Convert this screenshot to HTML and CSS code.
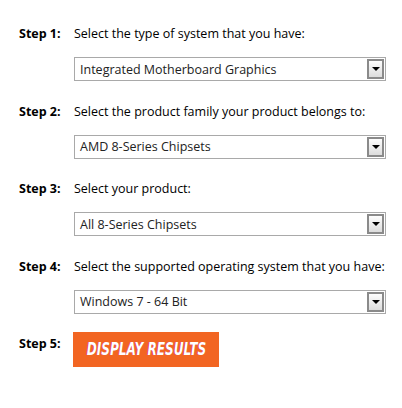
FILE: index.html
```html
<!DOCTYPE html>
<html>
<head>
<meta charset="utf-8">
<link rel="stylesheet" href="styles.css">
</head>
<body>
<div class="form">
  <div class="step">
    <div class="label">Step 1:</div>
    <div class="content">
      <div class="prompt">Select the type of system that you have:</div>
      <div class="select"><span class="value">Integrated Motherboard Graphics</span><span class="arrow"><i></i></span></div>
    </div>
  </div>
  <div class="step">
    <div class="label">Step 2:</div>
    <div class="content">
      <div class="prompt">Select the product family your product belongs to:</div>
      <div class="select"><span class="value">AMD 8-Series Chipsets</span><span class="arrow"><i></i></span></div>
    </div>
  </div>
  <div class="step">
    <div class="label">Step 3:</div>
    <div class="content">
      <div class="prompt">Select your product:</div>
      <div class="select"><span class="value">All 8-Series Chipsets</span><span class="arrow"><i></i></span></div>
    </div>
  </div>
  <div class="step">
    <div class="label">Step 4:</div>
    <div class="content">
      <div class="prompt">Select the supported operating system that you have:</div>
      <div class="select"><span class="value">Windows 7 - 64 Bit</span><span class="arrow"><i></i></span></div>
    </div>
  </div>
  <div class="step last">
    <div class="label">Step 5:</div>
    <div class="content">
      <div class="button"><span class="btn-text">DISPLAY RESULTS</span></div>
    </div>
  </div>
</div>
</body>
</html>
```
FILE: styles.css
```css
html, body {
  margin: 0;
  padding: 0;
  background: #ffffff;
}
body {
  font-family: "Open Sans", "Noto Sans", sans-serif;
  font-size: 12.5px;
  color: #000;
}
.form {
  padding: 25px 0 0 19px;
  display: flex;
  flex-direction: column;
  gap: 21.5px;
}
.step {
  display: flex;
}
.label {
  width: 55px;
  font-weight: bold;
  line-height: 18px;
}
.content {
  display: flex;
  flex-direction: column;
  gap: 14px;
}
.prompt {
  line-height: 18px;
}
.select {
  width: 304px;
  height: 22px;
  border: 1px solid #a9a9a9;
  display: flex;
  align-items: center;
  padding: 0 1px 0 5px;
  color: #222;
}
.value {
  flex: 1;
}
.arrow {
  width: 13px;
  height: 16px;
  border: 2px solid #8a8a8a;
  background: linear-gradient(#fdfdfd, #dcdcdc);
  display: flex;
  align-items: center;
  justify-content: center;
}
.arrow i {
  width: 0;
  height: 0;
  border-left: 4px solid transparent;
  border-right: 4px solid transparent;
  border-top: 4px solid #000;
}
.last .label {
  padding-top: 0;
}
.last .content {
  margin-top: -3px;
}
.button {
  width: 146px;
  height: 35px;
  background: #f26522;
  color: #fff;
  display: flex;
  align-items: center;
  justify-content: center;
  margin-left: -1px;
}
.btn-text {
  display: inline-block;
  font-family: "DejaVu Sans", sans-serif;
  font-weight: bold;
  font-style: italic;
  font-size: 17.5px;
  line-height: 1;
  transform: scaleX(0.69);
  white-space: nowrap;
  text-shadow: -1px 0 0 #d0306a;
}
```
